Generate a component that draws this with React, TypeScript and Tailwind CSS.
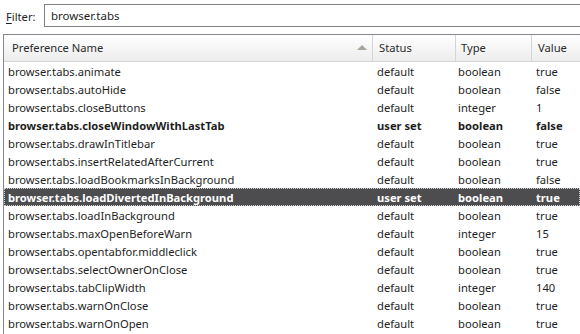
import React from 'react'

interface Pref {
  name: string
  status: string
  type: string
  value: string
}

const prefs: Pref[] = [
  { name: 'browser.tabs.animate', status: 'default', type: 'boolean', value: 'true' },
  { name: 'browser.tabs.autoHide', status: 'default', type: 'boolean', value: 'false' },
  { name: 'browser.tabs.closeButtons', status: 'default', type: 'integer', value: '1' },
  { name: 'browser.tabs.closeWindowWithLastTab', status: 'user set', type: 'boolean', value: 'false' },
  { name: 'browser.tabs.drawInTitlebar', status: 'default', type: 'boolean', value: 'true' },
  { name: 'browser.tabs.insertRelatedAfterCurrent', status: 'default', type: 'boolean', value: 'true' },
  { name: 'browser.tabs.loadBookmarksInBackground', status: 'default', type: 'boolean', value: 'false' },
  { name: 'browser.tabs.loadDivertedInBackground', status: 'user set', type: 'boolean', value: 'true' },
  { name: 'browser.tabs.loadInBackground', status: 'default', type: 'boolean', value: 'true' },
  { name: 'browser.tabs.maxOpenBeforeWarn', status: 'default', type: 'integer', value: '15' },
  { name: 'browser.tabs.opentabfor.middleclick', status: 'default', type: 'boolean', value: 'true' },
  { name: 'browser.tabs.selectOwnerOnClose', status: 'default', type: 'boolean', value: 'true' },
  { name: 'browser.tabs.tabClipWidth', status: 'default', type: 'integer', value: '140' },
  { name: 'browser.tabs.warnOnClose', status: 'default', type: 'boolean', value: 'true' },
  { name: 'browser.tabs.warnOnOpen', status: 'default', type: 'boolean', value: 'true' },
]

const SELECTED = 'browser.tabs.loadDivertedInBackground'

export default function App() {
  return (
    <div
      className="w-[580px] h-[334px] overflow-hidden bg-white text-[11.2px] text-[#1e1e1e]"
      style={{ fontFamily: '"Noto Sans", "DejaVu Sans", sans-serif' }}
    >
      {/* Filter bar */}
      <div className="flex items-center h-[34px] pl-[6px]">
        <label className="w-[38px] leading-none">
          <span className="underline underline-offset-2">F</span>ilter:
        </label>
        <div className="flex-1 h-[23px] mt-[-3px] border border-r-0 border-[#838383] flex items-center pl-[6px] text-[11.5px]">
          browser.tabs
        </div>
      </div>

      {/* Table */}
      <div className="ml-[3px] border-l border-t border-[#828790] h-full">
        {/* Header */}
        <div className="flex h-[27px] border-b border-[#d5d5d5] bg-gradient-to-b from-white to-[#ececec] text-[#2b2b2b]">
          <div className="w-[369px] flex items-center justify-between pl-[8px] pr-[5px] border-r border-[#d5d5d5]">
            <span>Preference Name</span>
            <svg width="10" height="6" viewBox="0 0 10 6">
              <polygon points="5,0 10,5 0,5" fill="#a8a59a" />
            </svg>
          </div>
          <div className="w-[83px] flex items-center pl-[6px] border-r border-[#d5d5d5]">Status</div>
          <div className="w-[76px] flex items-center pl-[5px] border-r border-[#d5d5d5]">Type</div>
          <div className="flex-1 flex items-center pl-[6px]">Value</div>
        </div>

        {/* Rows */}
        {prefs.map((p) => {
          const selected = p.name === SELECTED
          const bold = p.status === 'user set'
          return (
            <div
              key={p.name}
              className={
                'flex h-[18px] items-center pt-[2px] ' +
                (selected ? 'bg-[#4d4d4f] text-white border border-dotted border-[#d0d0d0] ' : 'border border-transparent ') +
                (bold ? 'font-bold' : '')
              }
            >
              <div className="w-[369px] pl-[3px] whitespace-nowrap">{p.name}</div>
              <div className="w-[83px] pl-[3px]">{p.status}</div>
              <div className="w-[77px] pl-[1px]">{p.type}</div>
              <div className="flex-1 pl-[2px]">{p.value}</div>
            </div>
          )
        })}
      </div>
    </div>
  )
}
